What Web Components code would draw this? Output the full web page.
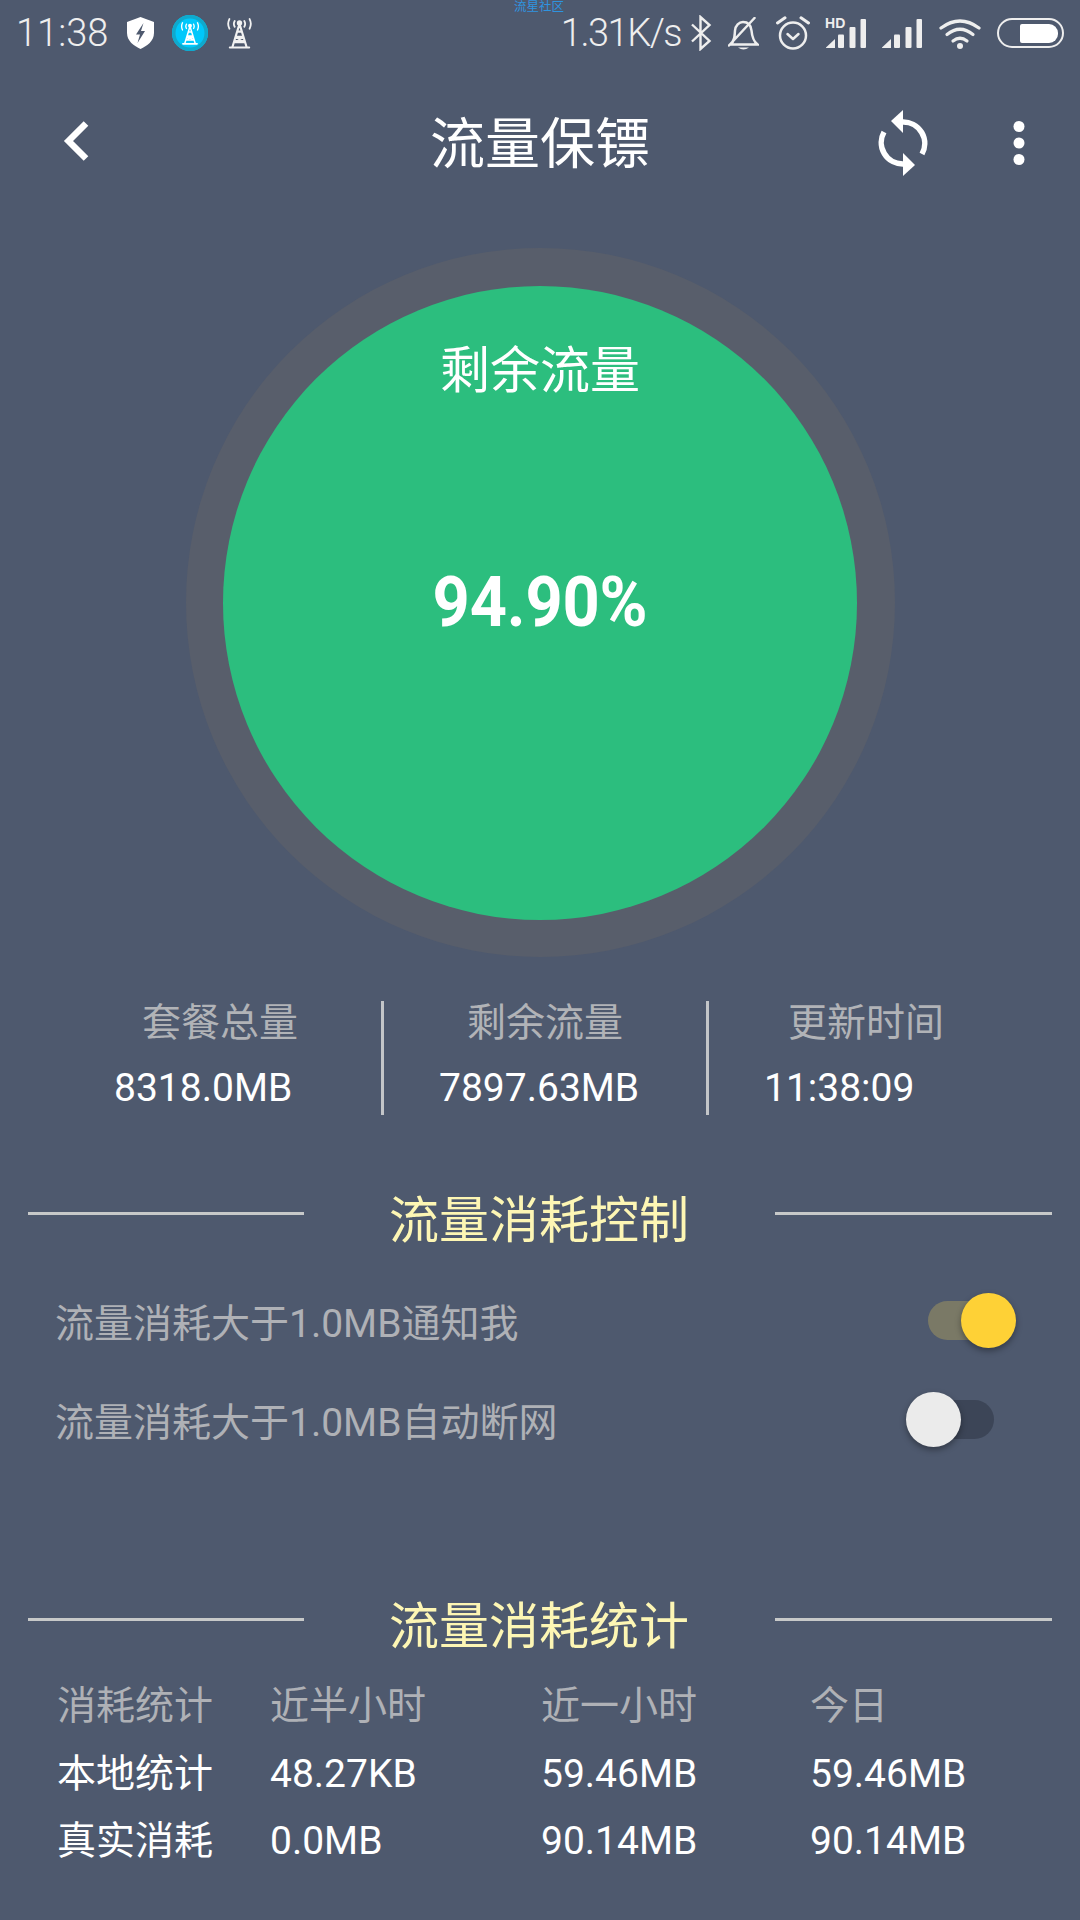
<!DOCTYPE html>
<html><head><meta charset="utf-8">
<style>
html,body{margin:0;padding:0;background:#4e596e;}
body{width:1080px;height:1920px;overflow:hidden;font-family:Roboto,"Noto Sans CJK SC",sans-serif;}
</style></head><body>
<traffic-app></traffic-app>
<script>
const FONT='Roboto,"Noto Sans CJK SC",sans-serif';
function def(name,css,html){
  customElements.define(name,class extends HTMLElement{
    connectedCallback(){ if(this.shadowRoot)return;
      const r=this.attachShadow({mode:'open'});
      r.innerHTML='<style>'+css+'</style>'+(typeof html==='function'?html(this):html);
    }
  });
}
const tower=(c,w,h)=>`<svg width="${w}" height="${h}" viewBox="0 0 28 32" style="display:block"><g fill="none" stroke="${c}" stroke-width="2.200" stroke-linecap="round"><path d="M14 6 L6.500 30.500 M14 6 L21.500 30.500 M4 30.500H24 M11.500 14H16.500 M10 19.500H18 M8.500 25H19.500 M10 19.500L19 25 M18 19.500L9 25"/><path d="M9 3Q7.300 6 9 9 M19 3Q20.700 6 19 9 M3.500 1Q1 6 3.500 11 M24.500 1Q27 6 24.500 11" stroke-width="1.900"/></g><circle cx="14" cy="5" r="2.800" fill="${c}"/></svg>`;
const bars=()=>`<svg width="40" height="29" viewBox="0 0 40 29" style="display:block"><g fill="#eee"><path d="M0 28.500 L9 20 V29 H0Z"/><rect x="12" y="15.500" width="6" height="13.500" rx="1"/><rect x="23.500" y="8" width="6" height="21" rx="1"/><rect x="34.500" y="0" width="5.500" height="29" rx="1"/></g></svg>`;

def('status-bar',`
:host{display:flex;align-items:center;height:66px;padding:0 16px;color:#eee;position:relative;font-size:38px;font-weight:300;font-family:${FONT};}
.l,.r{display:flex;align-items:center;}
.r{margin-left:auto;}
.brand{position:absolute;left:514px;top:0;font-size:12.500px;font-weight:400;color:#2e94e0;line-height:14px;}
svg{display:block;flex:none}
.hd{position:relative;display:block;width:40px;height:29px;margin-top:0}
.hd b{position:absolute;left:-1px;top:-2px;font:700 14px/13px "Liberation Sans",sans-serif;color:#eee;letter-spacing:.2px}
`,`
<div class="brand">流星社区</div>
<div class="l">
 <span class="time">11:38</span>
 <svg style="margin-left:19px" width="27" height="32" viewBox="0 0 27 32"><path d="M13.500 0 L27 5 V16 C27 24 20 29 13.500 32 C7 29 0 24 0 16 V5Z" fill="#fff"/><path d="M16.500 6 L9 17.500 H13 L10.500 26 L18 14 H14Z" fill="#4e596e"/></svg>
 <span style="margin-left:18px;width:36px;height:36px;border-radius:50%;background:#00c8fb;box-shadow:inset 0 0 0 3.500px #10a9cc;display:flex;align-items:center;justify-content:center">${tower('#fff',20,23)}</span>
 <span style="margin-left:18px;display:block">${tower('#f2f2f2',27,31)}</span>
</div>
<div class="r">
 <span style="letter-spacing:-1.500px">1.31K/s</span>
 <svg style="margin-left:9px" width="22" height="36" viewBox="0 0 22 36"><path d="M2 9.500 L19.500 26 L10.500 34 V2 L19.500 10 L2 26.500" fill="none" stroke="#eee" stroke-width="2.400"/></svg>
 <svg style="margin-left:16px" width="31" height="33" viewBox="0 0 31 33"><path d="M2.500 27 C7 24 6.500 19 7 13.500 C7.500 8.500 11 5 15 5 C20 5 23 8.500 23.500 13.500 C24 19.500 25 24 29.500 27.500 H2Z M1 28.500 L26.500 1 " fill="none" stroke="#eee" stroke-width="2.500" stroke-linecap="round"/><path d="M10 30.500 Q15.500 34.500 21 30.500Z" fill="#eee"/></svg>
 <svg style="margin-left:17px" width="34" height="34" viewBox="0 0 34 34"><circle cx="17" cy="19.500" r="13" fill="none" stroke="#eee" stroke-width="2.500"/><path d="M11.500 18 L17 23 L22.500 18" fill="none" stroke="#eee" stroke-width="2.500" stroke-linecap="round" stroke-linejoin="round"/><path d="M1.500 7 L9 1.800 M32.500 7 L25 1.800" fill="none" stroke="#eee" stroke-width="3" stroke-linecap="round"/></svg>
 <span class="hd" style="margin-left:16px">${bars()}<b>HD</b></span>
 <span style="margin-left:16px;display:block">${bars()}</span>
 <svg style="margin-left:17px" width="42" height="31" viewBox="0 0 42 31"><g fill="none" stroke="#eee" stroke-width="3.200" stroke-linecap="round"><path d="M2 10 Q21 -4 40 10"/><path d="M8 16.500 Q21 6 34 16.500"/><path d="M14 23 Q21 17.500 28 23"/></g><circle cx="21" cy="28" r="3" fill="#eee"/></svg>
 <span style="margin-left:16px;box-sizing:border-box;width:67px;height:30px;border:2.500px solid #eee;border-radius:15px;display:flex;justify-content:flex-end;padding:3.500px 4px;">
   <span style="display:block;width:38px;height:100%;background:#fff;border-radius:2px 9px 9px 2px"></span></span>
</div>`);

def('app-bar',`
:host{display:grid;grid-template-columns:1fr auto 1fr;align-items:center;height:154px;color:#fff;font-family:${FONT};}
.t{font-size:55px;line-height:60px;padding-top:2px}
.a{display:flex;align-items:center;justify-content:flex-end;padding-right:55px}
.b{padding-left:62px;display:flex}
svg{display:block}
`,`
<div class="b"><svg width="28" height="44" viewBox="0 0 28 44" style="margin-top:-4px"><path d="M24 4.500 L6.500 22 L24 39.500" fill="none" stroke="#fff" stroke-width="6.500"/></svg></div>
<div class="t">流量保镖</div>
<div class="a">
 <svg width="50" height="66" viewBox="0 0 50 66"><path d="M25 12 A21.500 21.500 0 0 1 44 44" fill="none" stroke="#fff" stroke-width="5.500"/><path d="M25 0 L13 11 L25 23Z" fill="#fff"/><g transform="rotate(180 25 33)"><path d="M25 12 A21.500 21.500 0 0 1 44 44" fill="none" stroke="#fff" stroke-width="5.500"/><path d="M25 0 L13 11 L25 23Z" fill="#fff"/></g></svg>
 <svg style="margin-left:85px" width="12" height="44" viewBox="0 0 12 44"><g fill="#fff"><circle cx="6" cy="5.500" r="5.500"/><circle cx="6" cy="22" r="5.500"/><circle cx="6" cy="38.500" r="5.500"/></g></svg>
</div>`);

def('usage-dial',`
:host{display:flex;justify-content:center;font-family:${FONT};color:#fff;margin-top:28px}
.o{box-sizing:border-box;width:709px;height:709px;border-radius:50%;background:#585e6b;padding:37.500px;}
.i{height:100%;border-radius:50%;background:#2cbe7e;display:flex;flex-direction:column;align-items:center;}
.l{font-size:50px;line-height:60px;margin-top:55px}
.v{font-size:65px;font-weight:700;line-height:80px;margin-top:161px;transform:scaleY(1.09);letter-spacing:-.2px}
`,`<div class="o"><div class="i"><div class="l"><slot name="label"></slot></div><div class="v"><slot name="value"></slot></div></div></div>`);

def('stat-row',`
:host{display:grid;grid-template-columns:324px 1px 324px 1px 1fr;margin:44px 0 0 58px;height:114px;font-family:${FONT};}
`,`<slot></slot>`);
def('stat-cell',`
:host{display:block;font-size:39px;line-height:46px;}
.a{color:#b1b3b7;margin-top:-1px}
.b{color:#fff;margin-top:19px;}
`,h=>`<div class="a" style="padding-left:${h.getAttribute('lx')}px"><slot name="k"></slot></div><div class="b" style="padding-left:${h.getAttribute('vx')}px"><slot name="v"></slot></div>`);
def('v-rule',`:host{display:block;background:#c3c5c8;width:3px;height:114px;margin-left:-1px}`,``);

def('section-head',`
:host{display:flex;align-items:center;justify-content:space-between;padding:0 28px;font-family:${FONT};color:#fdf6b4;font-size:50px;line-height:60px;}
i{display:block;width:276px;height:3px;background:#c7c9c9;margin-top:-16px}
span{margin-left:-1px}
i:last-child{width:277px}
`,`<i></i><span><slot></slot></span><i></i>`);

def('switch-row',`
:host{display:flex;align-items:center;height:99.500px;padding-left:55px;font-family:${FONT};font-size:39px;color:#afb1b6;}
.w{margin-left:auto;position:relative;height:56px;}
.t{position:absolute;top:9px;height:39px;border-radius:20px}
.k{position:absolute;top:1px;width:55px;height:55px;border-radius:50%;box-shadow:0 3px 6px rgba(0,0,0,.35)}
:host([on]) .w{width:88px;margin-right:64px}
:host([on]) .t{left:0;width:70px;background:#7a7966}
:host([on]) .k{right:0;background:#fed136}
:host(:not([on])) .w{width:88px;margin-right:86px}
:host(:not([on])) .t{right:0;width:70px;background:#3c4557}
:host(:not([on])) .k{left:0;background:#ebebeb}
`,`<span><slot></slot></span><div class="w"><div class="t"></div><div class="k"></div></div>`);

def('usage-table',`
:host{display:grid;grid-template-columns:213px 271px 269px 1fr;padding-left:57px;font-family:${FONT};font-size:39px;line-height:67.500px;color:#fff;margin-top:16px}
`,`<slot></slot>`);
def('t-c',`:host{display:block}:host([m]){color:#afb1b6}`,`<slot></slot>`);

def('traffic-app',`
:host{display:block;width:1080px;height:1920px;overflow:hidden;}
.s1{margin-top:76px}
.sw{margin-top:19px}
.s2{margin-top:128px}
`,`
<status-bar></status-bar>
<app-bar></app-bar>
<usage-dial><span slot="label">剩余流量</span><span slot="value">94.90%</span></usage-dial>
<stat-row>
 <stat-cell lx="84" vx="56"><span slot="k">套餐总量</span><span slot="v">8318.0MB</span></stat-cell><v-rule></v-rule>
 <stat-cell lx="84" vx="56"><span slot="k">剩余流量</span><span slot="v">7897.63MB</span></stat-cell><v-rule></v-rule>
 <stat-cell lx="80" vx="56"><span slot="k">更新时间</span><span slot="v">11:38:09</span></stat-cell>
</stat-row>
<section-head class="s1">流量消耗控制</section-head>
<div class="sw">
<switch-row on>流量消耗大于1.0MB通知我</switch-row>
<switch-row>流量消耗大于1.0MB自动断网</switch-row>
</div>
<section-head class="s2">流量消耗统计</section-head>
<usage-table>
 <t-c m>消耗统计</t-c><t-c m>近半小时</t-c><t-c m>近一小时</t-c><t-c m>今日</t-c>
 <t-c>本地统计</t-c><t-c>48.27KB</t-c><t-c>59.46MB</t-c><t-c>59.46MB</t-c>
 <t-c>真实消耗</t-c><t-c>0.0MB</t-c><t-c>90.14MB</t-c><t-c>90.14MB</t-c>
</usage-table>`);
</script>
</body></html>
